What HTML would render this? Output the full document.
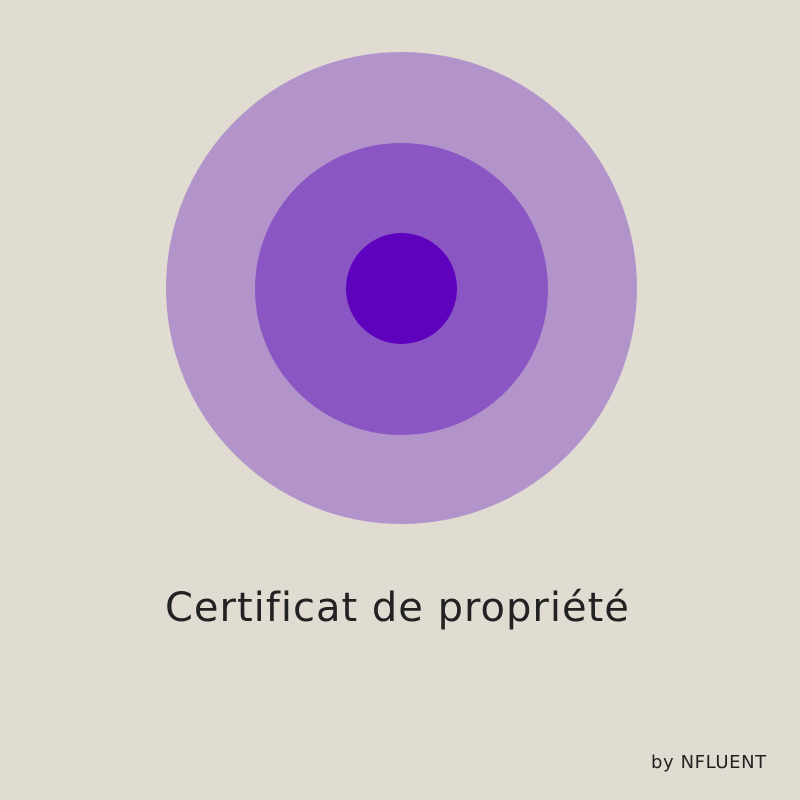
<!DOCTYPE html>
<html><head><meta charset="utf-8"><style>
html,body{margin:0;padding:0}
body{width:800px;height:800px;background:#e0dcd2;position:relative;overflow:hidden}
.c{position:absolute;border-radius:50%}
.t{position:absolute;font-family:"DejaVu Sans","Liberation Sans",sans-serif;color:#222;white-space:nowrap}
</style></head><body>
<div class="c" style="left:166px;top:52px;width:471px;height:472px;background:#b294cb"></div>
<div class="c" style="left:255px;top:143px;width:293px;height:292px;background:#8a56c3"></div>
<div class="c" style="left:346px;top:233px;width:111px;height:111px;background:#5e02bd"></div>
<div class="t" style="left:165px;top:585px;font-size:40px;letter-spacing:1px;">Certificat de propriété</div>
<div class="t" style="left:651px;top:752px;font-size:18px;letter-spacing:0.6px;">by NFLUENT</div>
</body></html>
